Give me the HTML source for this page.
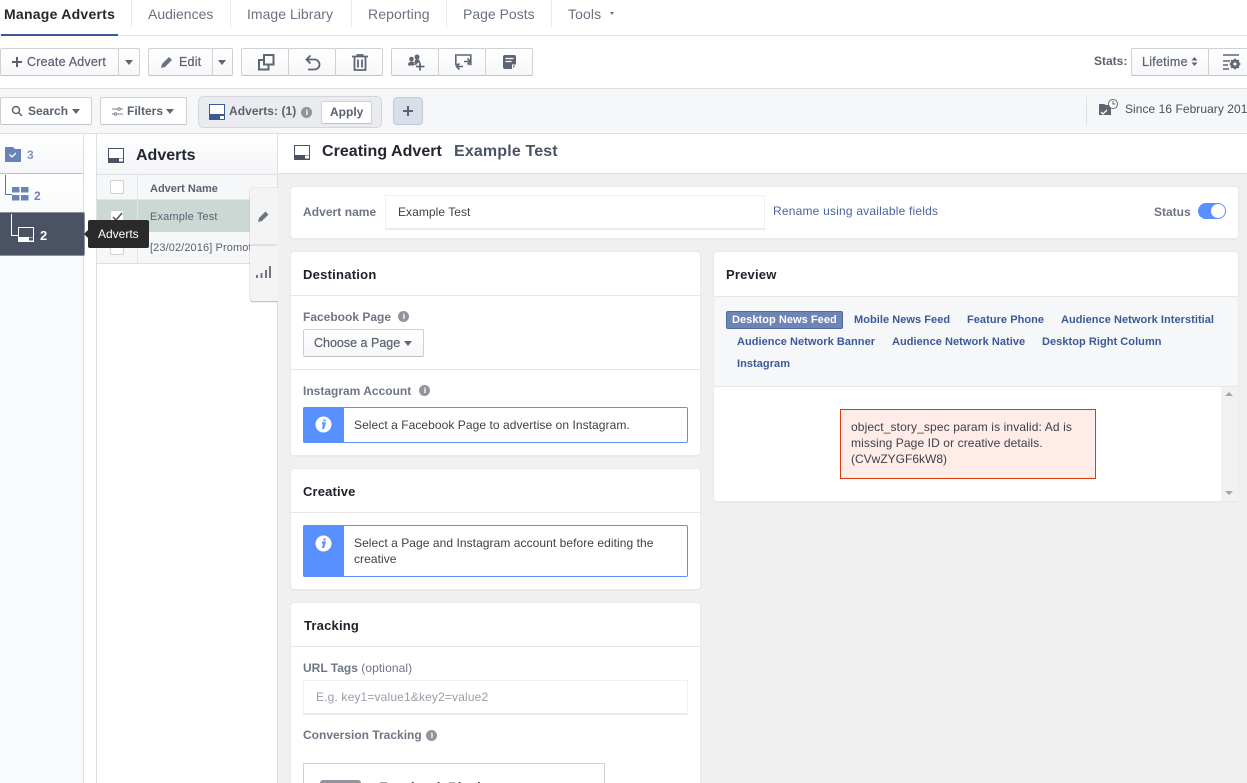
<!DOCTYPE html>
<html><head><meta charset="utf-8">
<style>
html,body{margin:0;padding:0;background:#fff}
#p{position:relative;width:1247px;height:783px;overflow:hidden;background:#fff;font-family:"Liberation Sans",Arial,sans-serif;font-size:12px;color:#4b4f56}
#p div,#p svg,#p span.a{position:absolute;box-sizing:border-box}
.t{white-space:nowrap;line-height:16px}
.b{background:linear-gradient(#fff,#f6f7f9);border:1px solid #ced0d4;border-radius:2px;border-bottom-color:#bec2c9}
.w{background:#fff;border:1px solid #ced0d4;border-radius:2px;border-bottom-color:#bec2c9}
.card{background:#fff;border-radius:3px;box-shadow:0 0 0 1px #e8e9eb,0 1px 1px #c9cbcf}
.l{height:1px;background:#e5e6e9}
.h{font-weight:bold;font-size:13px;color:#1d2129;letter-spacing:.2px}
.lab{font-weight:bold;color:#6f7683}
.lk{font-weight:bold;font-size:11px;color:#3b5998;letter-spacing:.05px}
.tab{font-size:14px;color:#6a7180;top:6px}
.sep{width:1px;background:#e9ebee;top:0;height:28px}
.ars{width:0;height:0;border-left:4.5px solid transparent;border-right:4.5px solid transparent;border-top:5px solid #5f6673}
.tx{color:#3d4148;letter-spacing:.06px}
</style></head><body><div id="p">

<!-- top tabs -->
<div class="t" style="left:4px;top:6px;font-size:14px;font-weight:bold;color:#23272f;letter-spacing:.25px">Manage Adverts</div>
<div class="t tab" style="left:148px">Audiences</div>
<div class="t tab" style="left:247px;letter-spacing:.03px">Image Library</div>
<div class="t tab" style="left:368px;letter-spacing:.1px">Reporting</div>
<div class="t tab" style="left:463px">Page Posts</div>
<div class="t tab" style="left:568px;letter-spacing:.1px">Tools</div>
<div class="ars" style="left:610px;top:12px;border-width:3px 2.5px 0;border-top-color:#6a7180"></div>
<div class="sep" style="left:131px"></div><div class="sep" style="left:230px"></div><div class="sep" style="left:351px"></div><div class="sep" style="left:446px"></div><div class="sep" style="left:551px"></div>
<div style="left:0;top:35px;width:1247px;height:1px;background:#e5e6e9"></div>
<div style="left:1px;top:34px;width:117px;height:2px;background:#3b5998"></div>

<!-- toolbar -->
<div class="b" style="left:0;top:48px;width:119px;height:28px"></div>
<div class="b" style="left:118px;top:48px;width:22px;height:28px"></div>
<svg style="left:11px;top:56px" width="12" height="12"><path d="M6 1v10M1 6h10" stroke="#5a6170" stroke-width="2"/></svg>
<div class="t" style="left:27px;top:54px;font-size:12.500px;letter-spacing:.2px;-webkit-text-stroke:.2px #5a6170;color:#5a6170">Create Advert</div>
<div class="ars" style="left:125px;top:60px"></div>

<div class="b" style="left:148px;top:48px;width:65px;height:28px"></div>
<div class="b" style="left:212px;top:48px;width:21px;height:28px"></div>
<svg style="left:160px;top:55px" width="14" height="14"><path d="M1 13l1-4 7-7 3 3-7 7z" fill="#6a7180"/></svg>
<div class="t" style="left:179px;top:54px;font-size:12.500px;letter-spacing:.2px;color:#5a6170;-webkit-text-stroke:.2px #5a6170">Edit</div>
<div class="ars" style="left:218px;top:60px"></div>

<div class="b" style="left:241px;top:48px;width:48px;height:28px"></div>
<div class="b" style="left:288px;top:48px;width:48px;height:28px"></div>
<div class="b" style="left:335px;top:48px;width:48px;height:28px"></div>
<svg style="left:258px;top:54px" width="17" height="17" fill="none" stroke="#5f6673" stroke-width="2"><rect x="1" y="6" width="9.500" height="9.500"/><rect x="6" y="1" width="9.500" height="9.500" fill="#fafbfb"/></svg>
<svg style="left:304px;top:54px" width="17" height="17" fill="none" stroke="#5f6673" stroke-width="1.800"><path d="M3 5.500h7.500a4.700 4.700 0 0 1 0 10H4"/><path d="M6.500 1.500L2.500 5.500l4 4"/></svg>
<svg style="left:352px;top:54px" width="17" height="17" fill="none" stroke="#5f6673" stroke-width="1.800"><path d="M0 2.500h16M5.500 2.500V1h5v1.500M2.500 3v13h11V3M6 5.500v8M10 5.500v8"/></svg>

<div class="b" style="left:391px;top:48px;width:48px;height:28px"></div>
<div class="b" style="left:438px;top:48px;width:48px;height:28px"></div>
<div class="b" style="left:485px;top:48px;width:48px;height:28px"></div>
<svg style="left:408px;top:54px" width="17" height="17" fill="#5f6673"><circle cx="3.500" cy="5" r="2.300"/><path d="M0 11.500c0-2.500 1-4 3.500-4S6 8.500 6 10v1.500z"/><circle cx="9" cy="3" r="2.500"/><path d="M6.500 9.500c0-2.500 .5-4.500 2.500-4.500s3 1.500 3 3.500l-3 1-.5 1.500H6.500z"/><path d="M12 8.500v8M8 12.500h8.500" stroke="#fff" stroke-width="3.500" fill="none"/><path d="M12 8.500v8M8 12.500h8.500" stroke="#5f6673" stroke-width="1.800" fill="none"/></svg>
<svg style="left:455px;top:54px" width="17" height="17" fill="none" stroke="#5f6673" stroke-width="1.600"><path d="M3.500 10.500H.8V1h15v9.500h-1.500"/><path d="M1.500 12.500h6.500M4.500 9.500l-3 3 3 3M9 7.500h6.500M12.500 4.500l3 3-3 3"/></svg>
<svg style="left:503px;top:55px" width="13" height="14"><path d="M0 2a2 2 0 0 1 2-2h9a2 2 0 0 1 2 2v8l-4 4H2a2 2 0 0 1-2-2z" fill="#5f6673"/><path d="M2.500 3.500h8M2.500 6.500h6" stroke="#fff" stroke-width="1.200"/><path d="M9.500 13.500v-3.500H13" stroke="#fff" fill="none"/></svg>

<div class="t" style="left:1094px;top:53px;font-weight:bold;color:#5a6170">Stats:</div>
<div class="b" style="left:1131px;top:48px;width:78px;height:28px"></div>
<div class="t" style="left:1142px;top:54px;font-size:12.500px;letter-spacing:.25px;color:#5a6170;-webkit-text-stroke:.2px #5a6170">Lifetime</div>
<svg style="left:1191px;top:57px" width="7" height="9" fill="#5f6673"><path d="M.5 3.500L3.500 0l3 3.500zM.5 5.500l3 3.500 3-3.500z"/></svg>
<div class="b" style="left:1208px;top:48px;width:50px;height:28px"></div>
<svg style="left:1222px;top:54px" width="22" height="17"><path d="M1 1h16M1 7h7M1 11h5M1 15h6" stroke="#5f6673" stroke-width="1.500"/><circle cx="13" cy="10" r="3.500" fill="none" stroke="#5f6673" stroke-width="2.500"/><path d="M13 4.500v11M7.500 10h11M9 6l8 8M17 6l-8 8" stroke="#5f6673" stroke-width="1.200"/><circle cx="13" cy="10" r="1.500" fill="#fff"/></svg>

<!-- filter bar -->
<div style="left:0;top:88px;width:1247px;height:46px;background:#f6f7f9;border-top:1px solid #dddfe2;border-bottom:1px solid #dddfe2"></div>
<div class="w" style="left:0;top:97px;width:92px;height:28px"></div>
<svg style="left:11px;top:105px" width="13" height="13" fill="none" stroke="#5f6673" stroke-width="1.500"><circle cx="5" cy="5" r="3.500"/><path d="M7.500 7.500l3.500 3.500"/></svg>
<div class="t" style="left:28px;top:103px;font-weight:bold;color:#5a6170">Search</div>
<div class="ars" style="left:72px;top:109px"></div>
<div class="w" style="left:100px;top:97px;width:87px;height:28px"></div>
<svg style="left:112px;top:106px" width="11" height="11" stroke="#7b8190" fill="none"><path d="M0 3h6M8 3h3M0 8h2M5 8h6"/><circle cx="7" cy="3" r="1.300"/><circle cx="3.500" cy="8" r="1.300"/></svg>
<div class="t" style="left:127px;top:103px;font-weight:bold;color:#5a6170">Filters</div>
<div class="ars" style="left:166px;top:109px"></div>

<div style="left:198px;top:96px;width:184px;height:32px;background:#e9ebee;border:1px solid #d3d6db;border-radius:5px"></div>
<svg style="left:209px;top:104px" width="16" height="16"><rect x=".5" y=".5" width="15" height="15" fill="#fff" stroke="#3b5998"/><rect x="0" y="10" width="16" height="6" fill="#3b5998"/><rect x="11" y="12" width="4" height="3" fill="#fff"/></svg>
<div class="t" style="left:229px;top:103px;font-weight:bold;color:#5a6170;font-size:12px;letter-spacing:.05px">Adverts: (1)</div>
<svg style="left:301px;top:107px" width="11" height="11"><circle cx="5.500" cy="5.500" r="5.500" fill="#90949c"/><path d="M5 5h1.200l-.5 3M5.800 2.500v1.200" stroke="#fff" stroke-width="1.300"/></svg>
<div class="w" style="left:321px;top:101px;width:51px;height:23px"></div>
<div class="t" style="left:330px;top:104px;font-weight:bold;color:#5a6170">Apply</div>
<div style="left:393px;top:97px;width:30px;height:28px;background:#d8dfea;border:1px solid #bfcbe0;border-radius:4px"></div>
<svg style="left:402px;top:105px" width="12" height="12"><path d="M6 1v10M1 6h10" stroke="#5a6170" stroke-width="2"/></svg>

<div style="left:1086px;top:97px;width:1px;height:28px;background:#dddfe2"></div>
<svg style="left:1098px;top:98px" width="22" height="19"><path d="M1 6h5l2 1h5v10H1z" fill="#5f6673"/><path d="M3 14l2 2 4-4" stroke="#fff" stroke-width="1.300" fill="none"/><circle cx="15" cy="6" r="4.500" fill="#fff" stroke="#5f6673"/><path d="M15 3v3h2.500" stroke="#5f6673" fill="none"/></svg>
<div class="t" style="left:1125px;top:101px;color:#4b4f56;letter-spacing:.05px">Since 16 February 2016</div>

<!-- left col -->
<div style="left:0;top:134px;width:84px;height:649px;background:#f9fafc;border-right:1px solid #dddfe2"></div>
<div style="left:0;top:134px;width:83px;height:40px;background:linear-gradient(#fff,#f6f7f9);border-bottom:1px solid #bec2c9"></div>
<div style="left:0;top:175px;width:83px;height:37px;background:linear-gradient(#fff,#f9fafc)"></div>
<svg style="left:5px;top:147px" width="16" height="15"><path d="M0 0h8l2 2h6v13H0z" fill="#6a83b5"/><path d="M4.500 7.500l2.500 2.500 4-4" stroke="#fff" stroke-width="1.300" fill="none"/></svg>
<div class="t" style="left:27px;top:147px;font-weight:bold;color:#7f96c2">3</div>
<div style="left:5px;top:175px;width:7px;height:20px;border-left:1px solid #5b74a8;border-bottom:1px solid #5b74a8"></div>
<svg style="left:12px;top:187px" width="17" height="14" fill="#6a83b5"><rect width="7.500" height="5.500"/><rect x="9" width="7.500" height="5.500"/><rect y="8" width="7.500" height="5.500"/><rect x="9" y="8" width="7.500" height="5.500"/></svg>
<div class="t" style="left:34px;top:188px;font-weight:bold;color:#6a83b5">2</div>
<div style="left:0;top:212px;width:85px;height:44px;background:#4b5263;border:1px solid #8b919c;border-left:0;border-radius:0 2px 2px 0"></div>
<div style="left:11px;top:214px;width:7px;height:22px;border-left:1px solid #fff;border-bottom:1px solid #fff"></div>
<svg style="left:18px;top:227px" width="16" height="15"><rect x=".5" y=".5" width="15" height="14" fill="#4b5263" stroke="#fff"/><rect y="10" width="16" height="5" fill="#fff"/><rect x="11" y="10.500" width="4" height="3" fill="#4b5263"/></svg>
<div class="t" style="left:40px;top:228px;font-weight:bold;color:#fff;font-size:13px">2</div>

<!-- adverts panel -->
<div style="left:96px;top:134px;width:182px;height:649px;background:#fff;border-left:1px solid #dddfe2;border-right:1px solid #dddfe2"></div>
<div style="left:97px;top:134px;width:180px;height:41px;background:linear-gradient(#fff,#f4f5f7);border-bottom:1px solid #dddfe2"></div>
<svg style="left:108px;top:148px" width="16" height="15"><rect x=".5" y=".5" width="15" height="14" fill="#fff" stroke="#4b5263"/><rect y="10" width="16" height="5" fill="#4b5263"/><rect x="11" y="10.500" width="4" height="3" fill="#fff"/></svg>
<div class="t" style="left:136px;top:148px;font-weight:bold;font-size:16px;color:#23272f">Adverts</div>
<div style="left:97px;top:175px;width:180px;height:25px;background:#f6f7f9;border-bottom:1px solid #e4e5e8"></div>
<div style="left:97px;top:200px;width:180px;height:32px;background:#ccd8d3"></div>
<div style="left:97px;top:232px;width:180px;height:32px;background:#f6f7f9;border-bottom:1px solid #dddfe2"></div>
<div style="left:137px;top:175px;width:1px;height:89px;background:#e4e5e8"></div>
<div style="left:110px;top:180px;width:14px;height:14px;background:#fff;border:1px solid #ced0d4;border-radius:2px"></div>
<div style="left:110px;top:210px;width:14px;height:14px;background:#fff;border:1px solid #ced0d4;border-radius:2px"></div>
<svg style="left:111px;top:211px" width="13" height="12"><path d="M2 6l3 3 6-7" stroke="#4b5263" stroke-width="1.500" fill="none"/></svg>
<div style="left:110px;top:241px;width:14px;height:14px;background:#fff;border:1px solid #ced0d4;border-radius:2px"></div>
<div class="t" style="left:150px;top:181px;font-weight:bold;font-size:11px;color:#5a6170">Advert Name</div>
<div class="t" style="left:150px;top:209px;font-size:11px;letter-spacing:.15px;color:#5a6170">Example Test</div>
<div class="t" style="left:150px;top:240px;width:100px;overflow:hidden;font-size:11px;letter-spacing:.1px;color:#5a6170">[23/02/2016] Promotion</div>
<div style="left:250px;top:188px;width:28px;height:113px;background:#f4f4f4;border-radius:3px 0 0 3px;box-shadow:0 0 1px #aaa,0 1px 1px #bbb"></div>
<div style="left:250px;top:244px;width:27px;height:2px;background:#dddfe2"></div>
<svg style="left:257px;top:209px" width="14" height="14"><path d="M1 13l1-4 6.500-6.500 3 3L5 12z" fill="#6f7683"/></svg>
<svg style="left:256px;top:265px" width="16" height="14" fill="#6f7683"><rect y="10" width="2" height="3"/><rect x="4.500" y="8" width="2" height="5"/><rect x="9" y="5" width="2" height="8"/><rect x="13" y="1" width="2" height="12"/></svg>
<!-- tooltip -->
<div style="left:88px;top:220px;width:61px;height:28px;background:#2a2a2a;border-radius:2px"></div>
<div style="left:84px;top:230px;width:0;height:0;border-top:4px solid transparent;border-bottom:4px solid transparent;border-right:4px solid #2a2a2a"></div>
<div class="t" style="left:98px;top:226px;color:#fff;font-size:12px">Adverts</div>

<!-- main -->
<div style="left:278px;top:134px;width:969px;height:649px;background:#f0f0f0"></div>
<div style="left:278px;top:134px;width:969px;height:40px;background:#fff;border-bottom:1px solid #dddfe2"></div>
<svg style="left:294px;top:145px" width="16" height="15"><rect x=".5" y=".5" width="15" height="14" fill="#fff" stroke="#4b5263"/><rect y="10" width="16" height="5" fill="#4b5263"/><rect x="11" y="10.500" width="4" height="3" fill="#fff"/></svg>
<div class="t" style="left:322px;top:144px;font-weight:bold;font-size:16px;letter-spacing:.03px;color:#23272f">Creating Advert</div>
<div class="t" style="left:454px;top:144px;font-weight:bold;font-size:16px;letter-spacing:.15px;color:#4b5263">Example Test</div>

<!-- name card -->
<div class="card" style="left:291px;top:187px;width:947px;height:51px"></div>
<div class="t lab" style="left:303px;top:204px;letter-spacing:.05px">Advert name</div>
<div style="left:385px;top:195px;width:380px;height:35px;background:#fff;border:1px solid #eff0f2;border-bottom:2px solid #e9ebee"></div>
<div class="t" style="left:398px;top:204px;color:#3d4148;letter-spacing:.05px">Example Test</div>
<div class="t" style="left:773px;top:203px;color:#4a66a0;letter-spacing:.2px">Rename using available fields</div>
<div class="t lab" style="left:1154px;top:204px">Status</div>
<div style="left:1198px;top:203px;width:28px;height:16px;background:#5890ff;border-radius:8px"></div>
<div style="left:1211px;top:204px;width:14px;height:14px;background:#fff;border-radius:50%"></div>

<!-- destination -->
<div class="card" style="left:291px;top:252px;width:409px;height:203px"></div>
<div class="t h" style="left:303px;top:267px;letter-spacing:.25px">Destination</div>
<div class="l" style="left:291px;top:295px;width:409px"></div>
<div class="t lab" style="left:303px;top:309px">Facebook Page</div>
<svg style="left:398px;top:311px" width="11" height="11"><circle cx="5.500" cy="5.500" r="5.500" fill="#90949c"/><path d="M5 5h1.200l-.5 3M5.800 2.500v1.200" stroke="#fff" stroke-width="1.300"/></svg>
<div class="b" style="left:303px;top:329px;width:121px;height:28px"></div>
<div class="t" style="left:314px;top:335px;color:#5a6170;font-size:12.500px;-webkit-text-stroke:.2px #5a6170">Choose a Page</div>
<div class="ars" style="left:404px;top:341px"></div>
<div class="l" style="left:291px;top:369px;width:409px"></div>
<div class="t lab" style="left:303px;top:383px">Instagram Account</div>
<svg style="left:419px;top:385px" width="11" height="11"><circle cx="5.500" cy="5.500" r="5.500" fill="#90949c"/><path d="M5 5h1.200l-.5 3M5.800 2.500v1.200" stroke="#fff" stroke-width="1.300"/></svg>
<div style="left:303px;top:407px;width:385px;height:36px;border:1px solid #5890ff;border-radius:2px;background:#fff"></div>
<div style="left:303px;top:407px;width:41px;height:36px;background:#5890ff;border-radius:2px 0 0 2px"></div>
<svg style="left:315px;top:416px" width="17" height="17"><circle cx="8.500" cy="8.500" r="8" fill="#fff"/><path d="M7 7.500h2.500L8 13M9.500 3.500v2" stroke="#5890ff" stroke-width="2.200" fill="none"/></svg>
<div class="t tx" style="left:354px;top:417px">Select a Facebook Page to advertise on Instagram.</div>

<!-- creative -->
<div class="card" style="left:291px;top:469px;width:409px;height:120px"></div>
<div class="t h" style="left:303px;top:484px;letter-spacing:.15px">Creative</div>
<div class="l" style="left:291px;top:512px;width:409px"></div>
<div style="left:303px;top:525px;width:385px;height:52px;border:1px solid #5890ff;border-radius:2px;background:#fff"></div>
<div style="left:303px;top:525px;width:41px;height:52px;background:#5890ff;border-radius:2px 0 0 2px"></div>
<svg style="left:315px;top:535px" width="17" height="17"><circle cx="8.500" cy="8.500" r="8" fill="#fff"/><path d="M7 7.500h2.500L8 13M9.500 3.500v2" stroke="#5890ff" stroke-width="2.200" fill="none"/></svg>
<div class="t tx" style="left:354px;top:535px">Select a Page and Instagram account before editing the</div>
<div class="t tx" style="left:354px;top:551px">creative</div>

<!-- tracking -->
<div class="card" style="left:291px;top:603px;width:409px;height:200px"></div>
<div class="t h" style="left:304px;top:618px">Tracking</div>
<div class="l" style="left:291px;top:646px;width:409px"></div>
<div class="t lab" style="left:303px;top:660px">URL Tags <span style="font-weight:normal;letter-spacing:.1px">(optional)</span></div>
<div style="left:303px;top:680px;width:385px;height:35px;background:#fff;border:1px solid #eff0f2;border-bottom:2px solid #e9ebee"></div>
<div class="t" style="left:316px;top:689px;color:#9a9ea8;letter-spacing:.15px">E.g. key1=value1&amp;key2=value2</div>
<div class="t lab" style="left:303px;top:727px">Conversion Tracking</div>
<svg style="left:426px;top:730px" width="11" height="11"><circle cx="5.500" cy="5.500" r="5.500" fill="#90949c"/><path d="M5 5h1.200l-.5 3M5.800 2.500v1.200" stroke="#fff" stroke-width="1.300"/></svg>
<div style="left:303px;top:763px;width:302px;height:40px;background:#fff;border:1px solid #ced0d4"></div>
<div style="left:320px;top:780px;width:41px;height:10px;background:#90949c;border-radius:3px 3px 0 0"></div>
<div class="t" style="left:379px;top:779px;font-weight:bold;font-size:14px;color:#4b4f56">Facebook Pixel</div>

<!-- preview -->
<div class="card" style="left:714px;top:252px;width:524px;height:249px"></div>
<div class="t h" style="left:726px;top:267px">Preview</div>
<div style="left:714px;top:296px;width:524px;height:91px;background:#f6f7f9;border-top:1px solid #e5e6e9;border-bottom:1px solid #e5e6e9"></div>
<div style="left:726px;top:311px;width:117px;height:18px;background:#6d84b4;border:1px solid #4f6aa3;border-radius:2px"></div>
<div class="t lk" style="left:732px;top:312px;color:#fff">Desktop News Feed</div>
<div class="t lk" style="left:854px;top:312px">Mobile News Feed</div>
<div class="t lk" style="left:967px;top:312px">Feature Phone</div>
<div class="t lk" style="left:1061px;top:312px">Audience Network Interstitial</div>
<div class="t lk" style="left:737px;top:334px">Audience Network Banner</div>
<div class="t lk" style="left:892px;top:334px">Audience Network Native</div>
<div class="t lk" style="left:1042px;top:334px">Desktop Right Column</div>
<div class="t lk" style="left:737px;top:356px">Instagram</div>
<div style="left:1221px;top:387px;width:17px;height:114px;background:#f1f1f1"></div>
<div style="left:1225px;top:392px;width:0;height:0;border-left:4px solid transparent;border-right:4px solid transparent;border-bottom:4px solid #a6a6a6"></div>
<div style="left:1225px;top:491px;width:0;height:0;border-left:4px solid transparent;border-right:4px solid transparent;border-top:4px solid #a6a6a6"></div>
<div style="left:840px;top:409px;width:256px;height:70px;background:#ffebe8;border:1px solid #dd3c10"></div>
<div class="t" style="left:851px;top:419px;color:#3d4148;letter-spacing:.12px">object_story_spec param is invalid: Ad is</div>
<div class="t" style="left:851px;top:435px;color:#3d4148;letter-spacing:.1px">missing Page ID or creative details.</div>
<div class="t" style="left:851px;top:451px;color:#3d4148">(CVwZYGF6kW8)</div>

</div></body></html>
